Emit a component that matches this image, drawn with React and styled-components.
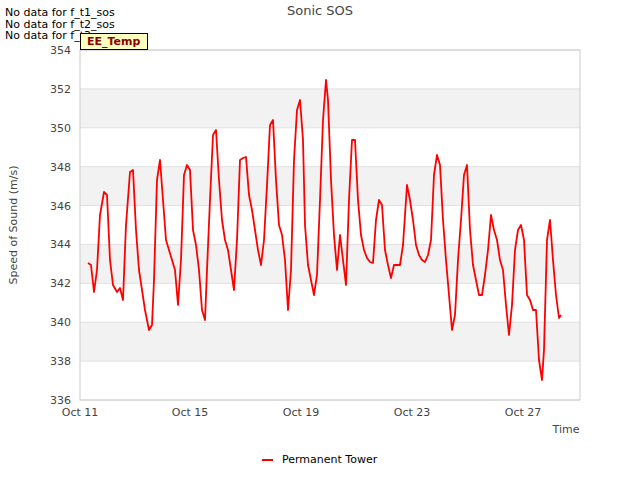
import styled, { createGlobalStyle } from 'styled-components';

const Global = createGlobalStyle`
  body { margin: 0; background: #fff; font-family: "DejaVu Sans", sans-serif; }
`;

const PTS = [[88,263],[91,265],[94,292],[97,270],[100,215],[104,192],[107,195],[110,260],[113,285],[117,292],[120,288],[123,300],[126,225],[130,172],[133,170],[136,230],[139,270],[142,290],[145,310],[149,330],[152,325],[154,280],[157,180],[160,160],[163,200],[166,240],[169,250],[172,260],[175,270],[178,305],[181,260],[184,175],[187,165],[190,170],[193,230],[196,245],[199,270],[202,310],[205,320],[207,270],[210,200],[213,135],[216,130],[219,180],[222,220],[225,240],[228,250],[231,270],[234,290],[237,240],[240,160],[243,158],[246,157],[249,195],[252,210],[255,230],[258,250],[261,265],[264,240],[267,185],[270,125],[273,120],[276,180],[279,225],[282,235],[285,260],[288,310],[291,270],[294,160],[297,110],[300,100],[303,140],[305,225],[308,265],[311,280],[314,295],[317,275],[320,200],[323,120],[326,80],[328,100],[331,180],[334,235],[337,270],[340,235],[343,260],[346,285],[349,200],[352,140],[355,140],[358,200],[361,235],[364,250],[367,258],[370,262],[373,263],[376,220],[379,200],[382,205],[385,250],[388,265],[391,278],[394,265],[397,265],[400,265],[403,245],[407,185],[410,200],[413,220],[416,245],[419,255],[422,260],[425,262],[428,255],[431,240],[434,175],[437,155],[440,165],[443,220],[446,260],[449,295],[452,330],[455,315],[458,260],[461,220],[464,175],[467,165],[470,230],[473,265],[476,280],[479,295],[482,295],[485,275],[488,250],[491,215],[494,230],[497,240],[500,260],[503,270],[506,305],[509,335],[512,305],[515,250],[518,230],[521,225],[524,240],[527,295],[530,300],[533,310],[536,310],[539,360],[542,380],[544,350],[547,240],[550,220],[553,260],[556,295],[559,318],[561,315]];

const Y_TICKS = [354, 352, 350, 348, 346, 344, 342, 340, 338, 336];
const X_TICKS = [['Oct 11', 80], ['Oct 15', 190], ['Oct 19', 301], ['Oct 23', 412], ['Oct 27', 523]];
const yOf = (v) => 50 + (354 - v) * (350 / 18);

const Frame = styled.div`
  position: relative;
  width: 640px;
  height: 480px;
`;

const Notes = styled.div`
  position: absolute;
  left: 5px;
  top: 7px;
  font-size: 11px;
  line-height: 11.5px;
  color: #000;
`;

const Badge = styled.div`
  position: absolute;
  left: 80px;
  top: 33px;
  padding: 1px 7px 1px 6px;
  background: #ffffc0;
  border: 1px solid #000;
  color: #8b0000;
  font-size: 11px;
  font-weight: bold;
`;

const Legend = styled.div`
  position: absolute;
  left: 262px;
  top: 453px;
  display: flex;
  align-items: center;
  gap: 9px;
  font-size: 11px;
`;

const Swatch = styled.span`
  width: 11px;
  height: 2px;
  background: #ff0000;
`;

export default function App() {
  return (
    <Frame>
      <Global />
      <svg width="640" height="480" style={{ position: 'absolute', inset: 0 }} fontFamily="DejaVu Sans, sans-serif">
        <rect x="80" y="50" width="500" height="350" fill="#fff" />
        {[352, 348, 344, 340].map((v) => (
          <rect key={v} x="80" y={yOf(v)} width="500" height={350 / 9} fill="#f2f2f2" />
        ))}
        {Y_TICKS.map((v) => (
          <g key={v}>
            <line x1="80" x2="580" y1={yOf(v)} y2={yOf(v)} stroke="#e0e0e0" />
            <text x="71" y={yOf(v) + 4} fontSize="11" fill="#444" textAnchor="end">{v}</text>
          </g>
        ))}
        <rect x="80" y="50" width="500" height="350" fill="none" stroke="#ccc" />
        {X_TICKS.map(([t, x]) => (
          <text key={t} x={x} y="416" fontSize="11" fill="#444" textAnchor="middle">{t}</text>
        ))}
        <text x="320" y="15" fontSize="13" fill="#444" textAnchor="middle">Sonic SOS</text>
        <text x="566" y="433" fontSize="11" fill="#444" textAnchor="middle">Time</text>
        <text x="17" y="225" fontSize="11" fill="#444" textAnchor="middle" transform="rotate(-90 17 225)">Speed of Sound (m/s)</text>
        <polyline points={PTS.map((p) => p.join(',')).join(' ')} fill="none" stroke="#ff0000" strokeWidth="1.8" strokeLinejoin="round" />
      </svg>
      <Notes>
        <div>No data for f_t1_sos</div>
        <div>No data for f_t2_sos</div>
        <div>No data for f_t3_sos</div>
      </Notes>
      <Badge>EE_Temp</Badge>
      <Legend><Swatch />Permanent Tower</Legend>
    </Frame>
  );
}
